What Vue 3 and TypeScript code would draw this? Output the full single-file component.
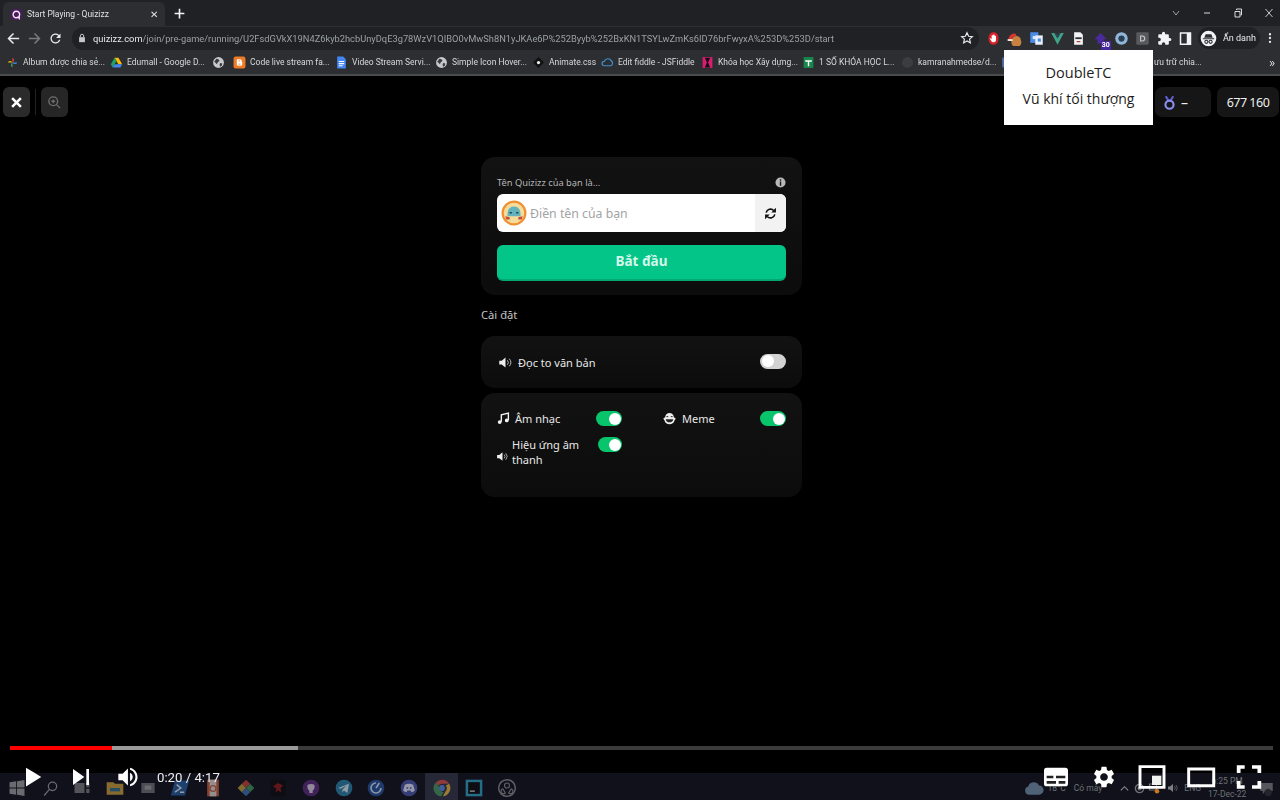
<template>
  <div class="screen">
    <div class="browser">
      <div class="tabstrip">
        <div class="tab">
          <Ico name="quizizz" :size="13" />
          <span class="tab-title">Start Playing - Quizizz</span>
          <span class="tab-close">✕</span>
        </div>
        <Ico class="new-tab" name="plus" :size="13" />
        <div class="win-btns">
          <Ico v-for="w in windowBtns" :key="w" :name="w" :size="12" />
        </div>
      </div>

      <div class="toolbar">
        <Ico name="back" :size="15" />
        <Ico class="dim" name="forward" :size="15" />
        <Ico name="reload" :size="15" />
        <div class="omnibox">
          <Ico name="lock" :size="10" />
          <span class="url"><b>quizizz.com</b>{{ urlPath }}</span>
          <Ico class="star" name="star" :size="14" />
        </div>
        <div class="extensions">
          <span v-for="e in extensions" :key="e" class="ext">
            <Ico :name="e" :size="15" />
            <i v-if="e === 'extArrow'" class="ext-badge">30</i>
          </span>
        </div>
        <div class="profile">
          <Ico name="incognito" :size="17" />
          <span>Ẩn danh</span>
        </div>
        <Ico class="menu-dots" name="dots" :size="14" />
      </div>

      <div class="bookmarks">
        <div v-for="b in bookmarks" :key="b.icon + b.label" class="bookmark" :style="{ width: b.width + 'px' }">
          <Ico v-if="b.icon" :name="b.icon" :size="13" />
          <span v-if="b.label">{{ b.label }}</span>
        </div>
        <span class="bm-more">»</span>
      </div>
    </div>

    <main class="page">
      <div class="topbar">
        <button class="square-btn"><Ico name="close" :size="15" /></button>
        <span class="top-divider"></span>
        <button class="square-btn muted"><Ico name="zoomIn" :size="15" /></button>
        <div class="chips">
          <div class="chip medal-chip"><Ico name="medal" :size="15" /><span>–</span></div>
          <div class="chip score-chip">677 160</div>
        </div>
      </div>

      <section class="column">
        <div class="card join-card">
          <div class="label-row">
            <span>Tên Quizizz của bạn là...</span>
            <Ico name="info" :size="11" />
          </div>
          <div class="name-input">
            <Ico class="avatar" name="avatar" :size="26" />
            <span class="placeholder">Điền tên của bạn</span>
            <span class="shuffle"><Ico name="sync" :size="13" /></span>
          </div>
          <button class="start-btn">Bắt đầu</button>
        </div>

        <h2 class="settings-title">Cài đặt</h2>

        <div class="card read-card">
          <Ico name="speaker" :size="15" />
          <span class="opt-text">Đọc to văn bản</span>
          <span class="toggle off"></span>
        </div>

        <div class="card options-card">
          <div class="option">
            <Ico name="music" :size="13" />
            <span class="opt-text">Âm nhạc</span>
            <span class="toggle"></span>
          </div>
          <div class="option">
            <Ico name="meme" :size="15" />
            <span class="opt-text">Meme</span>
            <span class="toggle"></span>
          </div>
          <div class="option effect">
            <Ico class="effect-icon" name="speaker" :size="13" />
            <span class="opt-text">Hiệu ứng âm thanh</span>
            <span class="toggle narrow"></span>
          </div>
        </div>
      </section>
    </main>

    <footer class="taskbar">
      <div class="task-icons">
        <span v-for="(t, i) in taskIcons" :key="i" class="task-icon" :class="{ running: t === 'chrome' }">
          <Ico :name="t" :size="20" />
        </span>
      </div>
      <div class="tray">
        <Ico name="cloud" :size="20" />
        <span class="tray-temp">18°C</span>
        <span class="tray-weather">Có mây</span>
        <Ico class="tray-up" name="trayUp" :size="11" />
        <Ico class="tray-disk" name="trayDisk" :size="11" />
        <Ico class="tray-net" name="trayNet" :size="12" />
        <Ico class="tray-sound" name="speaker" :size="12" />
        <span class="tray-lang">ENG</span>
        <span class="tray-clock">6:25 PM<br />17-Dec-22</span>
        <Ico class="tray-notif" name="trayNotif" :size="15" />
      </div>
    </footer>

    <div class="tooltip">
      <div class="tip-title">DoubleTC</div>
      <div class="tip-sub">Vũ khí tối thượng</div>
    </div>

    <div class="player">
      <div class="progress">
        <span class="played"></span>
        <span class="buffered"></span>
      </div>
      <div class="player-row">
        <Ico name="ytPlay" :size="48" />
        <Ico name="ytNext" :size="48" />
        <Ico name="ytVolume" :size="48" />
        <span class="time">0:20 / 4:17</span>
        <div class="player-right">
          <Ico v-for="c in playerRight" :key="c" :name="c" :size="48" />
        </div>
      </div>
    </div>
  </div>
</template>

<script setup lang="ts">
import { h } from 'vue';

type Shape = { d: string; fill?: string; stroke?: string; sw?: number; tf?: string };

// every icon is a list of paths in a 24x24 box, except the player ones (36x36)
const ICONS: { [key: string]: Shape[] } = {
  quizizz: [
    { d: 'M5 2h14a3 3 0 0 1 3 3v14a3 3 0 0 1-3 3H5a3 3 0 0 1-3-3V5a3 3 0 0 1 3-3z', fill: '#4a1c5e' },
    { d: 'M12 6a6 6 0 1 0 3 11l2 2v-4a6 6 0 0 0-5-9z', stroke: '#f2e6f5', sw: 2.6 },
  ],
  plus: [{ d: 'M12 3v18M3 12h18', stroke: '#f1f3f4', sw: 3 }],
  chevron: [{ d: 'M6 8l6 8 6-8', stroke: '#bdc1c6', sw: 1.6 }],
  minimize: [{ d: 'M6 12h12', stroke: '#dadce0', sw: 2 }],
  restore: [
    { d: 'M6 9h10v11H6z', stroke: '#dadce0', sw: 2 },
    { d: 'M9 6V4h10v12h-2', stroke: '#dadce0', sw: 2 },
  ],
  winClose: [{ d: 'M5 4l14 16M19 4L5 20', stroke: '#dadce0', sw: 1.8 }],
  back: [{ d: 'M21 12H5M12 4l-8 8 8 8', stroke: '#e8eaed', sw: 2.4 }],
  forward: [{ d: 'M3 12h16M12 4l8 8-8 8', stroke: '#e8eaed', sw: 2.4 }],
  reload: [
    {
      d: 'M17.65 6.35A7.958 7.958 0 0 0 12 4c-4.42 0-7.99 3.58-7.99 8s3.57 8 7.99 8c3.73 0 6.84-2.55 7.73-6h-2.08A5.99 5.99 0 0 1 12 18c-3.31 0-6-2.69-6-6s2.69-6 6-6c1.66 0 3.14.69 4.22 1.78L13 11h7V4l-2.35 2.35z',
      fill: '#e8eaed',
    },
  ],
  lock: [
    { d: 'M5 10h14v12H5z', fill: '#c4c7c9' },
    { d: 'M8 10V7a4 4 0 0 1 8 0v3', stroke: '#c4c7c9', sw: 2.4 },
  ],
  star: [{ d: 'M12 3l2.8 6 6.4.7-4.8 4.3 1.4 6.4L12 17l-5.8 3.4 1.4-6.4-4.8-4.3 6.4-.7z', stroke: '#e8eaed', sw: 2 }],
  extRed: [
    { d: 'M12 2c5 0 8 4 8 10s-3 10-8 10-8-4-8-10S7 2 12 2z', fill: '#d8202a' },
    { d: 'M9 8c0-2 2-2 2 0 0-3 3-3 3 0 1-1 2 0 2 1v5c0 3-2 4-4 4s-3-1-4-3l-2-3c1-1 2 0 3 1z', fill: '#fff' },
  ],
  extHat: [
    { d: 'M8 14a8 8 0 1 0 14 0c0-4-4-6-7-6-4 0-7 3-7 6z', fill: '#c8813f' },
    { d: 'M2 14c1-6 5-10 10-10 2 0 3 2 3 4-4 0-7 3-8 6z', fill: '#d8352c' },
    { d: 'M1 13h8v3H1z', fill: '#f1e8e0' },
  ],
  extTranslate: [
    { d: 'M2 2h13v17H2z', fill: '#4a8de8' },
    { d: 'M10 7h12v15H10z', fill: '#e8eef7' },
    { d: 'M6 8h5v5H6z', fill: '#dbe8fb' },
    { d: 'M14 12h5v5h-5z', fill: '#4a8de8' },
  ],
  extVue: [
    { d: 'M2 3h5l5 9 5-9h5L12 22z', fill: '#3fa486' },
    { d: 'M7 3h3l2 4 2-4h3l-5 9z', fill: '#2f4858' },
  ],
  extDoc: [
    { d: 'M5 2h10l4 4v16H5z', fill: '#f1f3f4' },
    { d: 'M7 10h10v3H7z', fill: '#333' },
    { d: 'M9 16h6v2H9z', fill: '#b3443c' },
  ],
  extArrow: [{ d: 'M12 3l10 10h-5v7H7v-7H2z', fill: '#4b2a9e' }],
  extRing: [
    { d: 'M12 2a10 10 0 1 0 0 20 10 10 0 0 0 0-20z', fill: '#8fb6d8' },
    { d: 'M12 7a5 5 0 1 0 0 10 5 5 0 0 0 0-10z', fill: '#2c3e55' },
  ],
  extD: [
    { d: 'M4 2h16a2 2 0 0 1 2 2v16a2 2 0 0 1-2 2H4a2 2 0 0 1-2-2V4a2 2 0 0 1 2-2z', fill: '#58595c' },
    { d: 'M9 8h2.5a4 4 0 0 1 0 8H9z', stroke: '#c9c9c9', sw: 1.8 },
  ],
  puzzle: [
    {
      d: 'M20.5 11H19V7a2 2 0 0 0-2-2h-4V3.5a2.5 2.5 0 0 0-5 0V5H4a2 2 0 0 0-2 2v3.8h1.5a2.7 2.7 0 0 1 0 5.4H2V20a2 2 0 0 0 2 2h3.8v-1.5a2.7 2.7 0 0 1 5.4 0V22H17a2 2 0 0 0 2-2v-4h1.5a2.5 2.5 0 0 0 0-5z',
      fill: '#f1f3f4',
    },
  ],
  sidebar: [
    { d: 'M4 3h16v18H4z', stroke: '#f1f3f4', sw: 2.4 },
    { d: 'M14 3h6v18h-6z', fill: '#f1f3f4' },
  ],
  incognito: [
    { d: 'M12 1a11 11 0 1 0 0 22 11 11 0 0 0 0-22z', fill: '#f1f3f4' },
    { d: 'M8 6h8l2 5H6zM4 11.5h16V13H4z', fill: '#2d2e31' },
    { d: 'M9 14.5a2.2 2.2 0 1 0 0 4.4 2.2 2.2 0 0 0 0-4.4zM15 14.5a2.2 2.2 0 1 0 0 4.4 2.2 2.2 0 0 0 0-4.4z', stroke: '#2d2e31', sw: 1.5 },
  ],
  dots: [{ d: 'M12 3.5a2 2 0 1 0 0 4 2 2 0 0 0 0-4zM12 10a2 2 0 1 0 0 4 2 2 0 0 0 0-4zM12 16.5a2 2 0 1 0 0 4 2 2 0 0 0 0-4z', fill: '#e8eaed' }],
  photos: [
    { d: 'M12 12V3a5 5 0 0 1 0 9z', fill: '#e8453c' },
    { d: 'M12 12h9a5 5 0 0 1-9 0z', fill: '#4285f4' },
    { d: 'M12 12v9a5 5 0 0 1 0-9z', fill: '#34a853' },
    { d: 'M12 12H3a5 5 0 0 1 9 0z', fill: '#fbbc05' },
  ],
  drive: [
    { d: 'M8.5 3h7l7 12h-7z', fill: '#fbbc05' },
    { d: 'M8.5 3l-7 12L5 21l7-12z', fill: '#1fa463' },
    { d: 'M5 21h14l3.5-6h-14z', fill: '#4285f4' },
  ],
  globe: [
    { d: 'M12 2a10 10 0 1 0 0 20 10 10 0 0 0 0-20z', fill: '#c6c8ca' },
    { d: 'M8 5l4 1 2 3-3 2-2 4-3-3-2-1zM15 13l4 1-1 4-3 2-1-4z', fill: '#3a3b3e' },
  ],
  blogger: [
    { d: 'M5 1h14a4 4 0 0 1 4 4v14a4 4 0 0 1-4 4H5a4 4 0 0 1-4-4V5a4 4 0 0 1 4-4z', fill: '#ef7a25' },
    { d: 'M8 6h5a3 3 0 0 1 3 4v1h1v4a3 3 0 0 1-3 3h-4a3 3 0 0 1-3-3V7z', fill: '#fff' },
    { d: 'M10 9h3M10 15h4', stroke: '#ef7a25', sw: 1.6 },
  ],
  gdocs: [
    { d: 'M4 1h11l5 5v17H4z', fill: '#4285f4' },
    { d: 'M7 9h10v2H7zM7 13h10v2H7zM7 17h7v2H7z', fill: '#fff' },
  ],
  animate: [
    { d: 'M12 2l10 10-10 10L2 12z', fill: '#111' },
    { d: 'M12 9a3 3 0 1 0 0 6 3 3 0 0 0 0-6z', fill: '#eee' },
  ],
  jsfiddle: [{ d: 'M6 18a4 4 0 0 1 0-8 7 7 0 0 1 13-1 5 5 0 0 1-1 9z', stroke: '#3f8fcf', sw: 2.2 }],
  pinkX: [
    { d: 'M3 2h18v20H3z', fill: '#d81b73' },
    { d: 'M7 3h10l-4 9 4 9H7l4-9z', fill: '#111' },
  ],
  sheet: [
    { d: 'M3 2h18v20H3z', fill: '#17884c' },
    { d: 'M6 8h12v2.5h-4.7V19h-2.6v-8.5H6z', fill: '#fff' },
  ],
  github: [{ d: 'M12 2a10 10 0 1 0 0 20 10 10 0 0 0 0-20z', fill: '#3c3d40' }],
  hidden: [{ d: 'M4 3h16v18H4z', fill: '#4d6ea8' }],
  close: [{ d: 'M5 5l14 14M19 5L5 19', stroke: '#fff', sw: 4 }],
  zoomIn: [{ d: 'M10 3a7 7 0 1 0 0 14 7 7 0 0 0 0-14zM15 15l6 6M10 7v6M7 10h6', stroke: '#6e6e6e', sw: 2.2 }],
  medal: [
    { d: 'M6 2l5 8M18 2l-5 8', stroke: '#5b5fd6', sw: 3.4 },
    { d: 'M12 9a6.5 6.5 0 1 0 0 13 6.5 6.5 0 0 0 0-13z', stroke: '#8b8ff0', sw: 3.4 },
  ],
  info: [
    { d: 'M12 1a11 11 0 1 0 0 22 11 11 0 0 0 0-22z', fill: '#b8b8b8' },
    { d: 'M10.5 5h3v3h-3zM10.5 10h3v9h-3z', fill: '#161616' },
  ],
  avatar: [
    { d: 'M12 .5a11.5 11.5 0 1 0 0 23 11.5 11.5 0 0 0 0-23z', fill: '#ef8f2f' },
    { d: 'M12 2.5a9.5 9.5 0 1 0 0 19 9.5 9.5 0 0 0 0-19z', fill: '#f5dc9a' },
    { d: 'M6 13c0-4 2-7 6-7s6 3 6 7v2H6z', fill: '#62b3bd' },
    { d: 'M8 11h2v1.5H8zM14 11h2v1.5h-2z', fill: '#24404a' },
    { d: 'M4 15l4 1v2H5zM20 15l-4 1v2h3z', fill: '#c8483c' },
  ],
  sync: [
    { d: 'M4 10.5A8.2 8.2 0 0 1 18 6.500', stroke: '#111', sw: 3 },
    { d: 'M22 1.500V10h-8.500z', fill: '#111' },
    { d: 'M20 13.500A8.2 8.2 0 0 1 6 17.500', stroke: '#111', sw: 3 },
    { d: 'M2 22.500V14h8.500z', fill: '#111' },
  ],
  speaker: [
    { d: 'M2 9v6h4l6 5V4L6 9z', fill: '#eee' },
    { d: 'M15 8.5a5 5 0 0 1 0 7M18 6a9 9 0 0 1 0 12', stroke: '#bbb', sw: 1.6 },
  ],
  music: [
    { d: 'M8 18V5l13-3v13', stroke: '#f2f2f2', sw: 2.6 },
    { d: 'M5 15a3.5 3.5 0 1 0 0 7 3.5 3.5 0 0 0 0-7zM18 12a3.5 3.5 0 1 0 0 7 3.5 3.5 0 0 0 0-7z', fill: '#f2f2f2' },
  ],
  meme: [
    { d: 'M5 10a7 7 0 0 1 14 0l3 2-2 3c-1 4-4 6-8 6s-7-2-8-6l-2-3z', fill: '#eee' },
    { d: 'M6 13h12c0 3-3 5-6 5s-6-2-6-5z', fill: '#222' },
    { d: 'M7 9h3M14 9h3', stroke: '#222', sw: 1.5 },
  ],
  ytPlay: [{ d: 'M12 26l6.500-4v-8L12 10zM18.500 22L25 18l-6.500-4z', fill: '#fff', tf: 'translate(2.2 2.2) scale(.88)' }],
  ytNext: [{ d: 'M12 24l8.500-6L12 12zM22 12v12h2V12z', fill: '#fff' }],
  ytVolume: [
    {
      d: 'M8 21h4l5 5V10l-5 5H8zM19 14v8c1.480-.68 2.500-2.230 2.500-4 0-1.740-1.020-3.260-2.500-4zM19 11.290c2.890.86 5 3.540 5 6.710s-2.110 5.850-5 6.710v2.060c4.010-.91 7-4.490 7-8.770s-2.990-7.860-7-8.770z',
      fill: '#fff',
      tf: 'translate(3.6 3.6) scale(.8)',
    },
  ],
  ytSubs: [
    { d: 'M11 11h14a2 2 0 0 1 2 2v10a2 2 0 0 1-2 2H11a2 2 0 0 1-2-2V13a2 2 0 0 1 2-2z', fill: '#fff' },
    { d: 'M11 17h5v2h-5zM18 17h7v2h-7zM11 21h7v2h-7zM20 21h5v2h-5z', fill: '#222' },
  ],
  ytGear: [
    {
      d: 'M19.14 12.94c.04-.3.06-.61.06-.94 0-.32-.02-.64-.07-.94l2.03-1.58a.49.49 0 0 0 .12-.61l-1.92-3.32a.488.488 0 0 0-.59-.22l-2.39.96c-.5-.38-1.03-.7-1.62-.94l-.36-2.54a.484.484 0 0 0-.48-.41h-3.84c-.24 0-.43.17-.47.41l-.36 2.54c-.59.24-1.13.57-1.62.94l-2.39-.96c-.22-.08-.47 0-.59.22L2.74 8.87c-.12.21-.08.47.12.61l2.03 1.58c-.05.3-.09.63-.09.94s.02.64.07.94l-2.03 1.58a.49.49 0 0 0-.12.61l1.92 3.32c.12.22.37.29.59.22l2.39-.96c.5.38 1.03.7 1.62.94l.36 2.54c.05.24.24.41.48.41h3.84c.24 0 .44-.17.47-.41l.36-2.54c.59-.24 1.13-.56 1.62-.94l2.39.96c.22.08.47 0 .59-.22l1.92-3.32c.12-.22.07-.47-.12-.61l-2.01-1.58zM12 15.6c-1.98 0-3.6-1.62-3.6-3.6s1.62-3.6 3.6-3.6 3.6 1.62 3.6 3.6-1.62 3.6-3.6 3.6z',
      fill: '#fff',
      tf: 'translate(8.4 8.4) scale(.8)',
    },
  ],
  ytMini: [
    { d: 'M9 10.200h18v15.600H9z', stroke: '#fff', sw: 2.200 },
    { d: 'M18 17h7v7h-7z', fill: '#f2f2f2' },
  ],
  ytTheater: [{ d: 'M9.500 12h18.800v12.500H9.500z', stroke: '#fff', sw: 2.200 }],
  ytFull: [{ d: 'M11 15v-4.500h4.500M21 10.500h5.500V15M26.500 21v4.500H21M15.500 25.500H11V21', stroke: '#fff', sw: 2.800 }],
  win: [{ d: 'M3 5l8-1v7.500H3zM12 4l9-1.500v9h-9zM3 12.500h8V20l-8-1zM12 12.500h9v9L12 20z', fill: '#9a9a9e' }],
  search: [{ d: 'M15 5a5 5 0 1 0 0 10 5 5 0 0 0 0-10zM11 14l-6 7', stroke: '#9a9a9e', sw: 1.500 }],
  taskview: [{ d: 'M3 6h12v12H3zM17 6h4v5h-4zM17 13h4v5h-4z', fill: '#77777c' }],
  explorer: [
    { d: 'M2 5h8l2 2h10v13H2z', fill: '#c79a3a' },
    { d: 'M6 12h12v4H6z', fill: '#2f6f8f' },
  ],
  printer: [
    { d: 'M4 6h16v12H4z', fill: '#6c6f74' },
    { d: 'M8 9h8v5H8z', fill: '#9a9da2' },
  ],
  powershell: [
    { d: 'M6 3h17l-5 18H1z', fill: '#245a9c' },
    { d: 'M8 8l5 4-7 5M12 17h5', stroke: '#dfe8f2', sw: 1.8 },
  ],
  recycle: [
    { d: 'M5 2h14v20H5z', fill: '#c45a3c' },
    { d: 'M8 2h8v20H8z', fill: '#d8d3cd' },
    { d: 'M12 9a3.5 3.5 0 1 0 0 7 3.5 3.5 0 0 0 0-7z', stroke: '#c45a3c', sw: 1.5 },
  ],
  gitk: [
    { d: 'M12 2l5 5-5 5-5-5z', fill: '#c0403a' },
    { d: 'M17 7l5 5-5 5-5-5z', fill: '#3f8f5a' },
    { d: 'M7 7l5 5-5 5-5-5z', fill: '#b89a3c' },
    { d: 'M12 12l5 5-5 5-5-5z', fill: '#3f6fb0' },
  ],
  redDark: [
    { d: 'M3 2h18v20H3z', fill: '#0c0c0f' },
    { d: 'M6 10l6-4 6 3-3 3 1 5-4-2-3 2 1-4z', fill: '#8c1a1a' },
  ],
  ghPurple: [
    { d: 'M12 2a10 10 0 1 0 0 20 10 10 0 0 0 0-20z', fill: '#5b2a7a' },
    { d: 'M8 8c2-1 6-1 8 0 1 3 0 6-2 7v3h-4v-3c-2-1-3-4-2-7z', fill: '#d8c8e0' },
  ],
  telegram: [
    { d: 'M12 2a10 10 0 1 0 0 20 10 10 0 0 0 0-20z', fill: '#2a7fa8' },
    { d: 'M5 12l13-5-2 11-4-3-2 2v-3l5-5-7 4z', fill: '#d6e8f0' },
  ],
  mysql: [
    { d: 'M12 2a10 10 0 1 0 0 20 10 10 0 0 0 0-20z', fill: '#264f97' },
    { d: 'M12 6a6 6 0 1 0 6 6', stroke: '#cfdcf2', sw: 2 },
    { d: 'M12 12l4-6', stroke: '#cfdcf2', sw: 2 },
  ],
  discord: [
    { d: 'M12 2a10 10 0 1 0 0 20 10 10 0 0 0 0-20z', fill: '#4a55a8' },
    { d: 'M7 8c3-1.5 7-1.5 10 0l2 7c-1 1-3 2-4 2l-1-2h-4l-1 2c-1 0-3-1-4-2z', fill: '#e0e3f5' },
    { d: 'M9 11h2v2H9zM13 11h2v2h-2z', fill: '#4a55a8' },
  ],
  chrome: [
    { d: 'M12 2a10 10 0 0 1 8.700 5H12a5 5 0 0 0-4.500 2.800L4.800 5A10 10 0 0 1 12 2z', fill: '#c9453a' },
    { d: 'M20.700 7A10 10 0 0 1 13 22l4.300-7.500A5 5 0 0 0 16.500 9z', fill: '#d9aa30' },
    { d: 'M4.800 5l4.300 7.500A5 5 0 0 0 14 16.700L11 22A10 10 0 0 1 4.800 5z', fill: '#3d8a4e' },
    { d: 'M12 8.500a3.500 3.500 0 1 0 0 7 3.500 3.500 0 0 0 0-7z', fill: '#4a7fd0' },
  ],
  webstorm: [
    { d: 'M2 2h20v20H2z', fill: '#2f9fc0' },
    { d: 'M5 5h14v14H5z', fill: '#0c0c10' },
    { d: 'M7 15h6v1.500H7z', fill: '#ddd' },
  ],
  obs: [
    { d: 'M12 2a10 10 0 1 0 0 20 10 10 0 0 0 0-20z', stroke: '#8a8a8e', sw: 1.8 },
    { d: 'M12 6a3 3 0 1 0 0 6 3 3 0 0 0 0-6zM7 13a3 3 0 1 0 3 5zM17 13a3 3 0 1 1-3 5z', stroke: '#8a8a8e', sw: 1.4 },
  ],
  cloud: [{ d: 'M6 20a5 5 0 0 1-1-9.800A7 7 0 0 1 18 9a5.500 5.500 0 0 1 0 11z', fill: '#4f6278' }],
  trayUp: [{ d: 'M4 16l8-8 8 8', stroke: '#8a8c90', sw: 2.4 }],
  trayDisk: [{ d: 'M12 3a9 9 0 1 0 0 18 9 9 0 0 0 0-18zM12 9a3 3 0 1 0 0 6 3 3 0 0 0 0-6z', stroke: '#6f7278', sw: 3 }],
  trayNet: [
    { d: 'M3 4h14v12H3z', stroke: '#6f7278', sw: 2.4 },
    { d: 'M18 14a4.500 4.500 0 1 0 0 9 4.500 4.500 0 0 0 0-9z', fill: '#c9781f' },
  ],
  trayNotif: [
    { d: 'M2 3h20v13H10l-4 5v-5H2z', fill: '#55575c' },
    { d: 'M17 13a6 6 0 1 0 0 11 6 6 0 0 0 0-11z', fill: '#23252d' },
  ],
};

const PLAYER_ICONS = ['ytPlay', 'ytNext', 'ytVolume', 'ytSubs', 'ytGear', 'ytMini', 'ytTheater', 'ytFull'];

const Ico = (props: { name: string; size: number }) => {
  const box = PLAYER_ICONS.includes(props.name) ? 36 : 24;
  return h(
    'svg',
    { class: 'ico', width: props.size, height: props.size, viewBox: `0 0 ${box} ${box}` },
    (ICONS[props.name] || []).map((s) =>
      h('path', {
        d: s.d,
        fill: s.fill || 'none',
        stroke: s.stroke || 'none',
        'stroke-width': s.sw || 0,
        transform: s.tf,
      }),
    ),
  );
};
Ico.props = ['name', 'size'];

const urlPath =
  '/join/pre-game/running/U2FsdGVkX19N4Z6kyb2hcbUnyDqE3g78WzV1QIBO0vMwSh8N1yJKAe6P%252Byyb%252BxKN1TSYLwZmKs6ID76brFwyxA%253D%253D/start';

const windowBtns = ['chevron', 'minimize', 'restore', 'winClose'];

const extensions = [
  'extRed',
  'extHat',
  'extTranslate',
  'extVue',
  'extDoc',
  'extArrow',
  'extRing',
  'extD',
  'puzzle',
  'sidebar',
];

// the last folder's name runs under the tooltip, only its tail shows
const bookmarks = [
  { icon: 'photos', label: 'Album được chia sẻ...', width: 104 },
  { icon: 'drive', label: 'Edumall - Google D...', width: 102 },
  { icon: 'globe', label: '', width: 21 },
  { icon: 'blogger', label: 'Code live stream fa...', width: 102 },
  { icon: 'gdocs', label: 'Video Stream Servi...', width: 100 },
  { icon: 'globe', label: 'Simple Icon Hover...', width: 97 },
  { icon: 'animate', label: 'Animate.css', width: 69 },
  { icon: 'jsfiddle', label: 'Edit fiddle - JSFiddle', width: 100 },
  { icon: 'pinkX', label: 'Khóa học Xây dựng...', width: 101 },
  { icon: 'sheet', label: '1 SỐ KHÓA HỌC L...', width: 99 },
  { icon: 'github', label: 'kamranahmedse/d...', width: 99 },
  { icon: 'hidden', label: '', width: 154 },
  { icon: '', label: 'ưu trữ chia...', width: 50 },
];

const taskIcons = [
  'win',
  'search',
  'taskview',
  'explorer',
  'printer',
  'powershell',
  'recycle',
  'gitk',
  'redDark',
  'ghPurple',
  'telegram',
  'mysql',
  'discord',
  'chrome',
  'webstorm',
  'obs',
];

const playerRight = ['ytSubs', 'ytGear', 'ytMini', 'ytTheater', 'ytFull'];
</script>

<style>
html,
body {
  margin: 0;
  background: #000;
}
</style>

<style scoped>
.screen {
  position: relative;
  width: 1280px;
  height: 800px;
  overflow: hidden;
  display: flex;
  flex-direction: column;
  background: #000;
  font-family: "Noto Sans", "Liberation Sans", sans-serif;
  color: #eee;
}

.ico {
  display: block;
  flex: none;
}

/* browser chrome */
.browser {
  flex: none;
  height: 76px;
  display: flex;
  flex-direction: column;
  font-family: Roboto, "Liberation Sans", sans-serif;
  filter: blur(0.4px);
}

.tabstrip {
  height: 26px;
  display: flex;
  align-items: flex-end;
  background: #202124;
  padding-left: 3px;
}

.tab {
  width: 162px;
  height: 24px;
  box-sizing: border-box;
  display: flex;
  align-items: center;
  padding: 0 7px;
  background: #2d2e31;
  border-radius: 6px 6px 0 0;
}

.tab-title {
  margin-left: 4px;
  flex: 1;
  font-size: 8.5px;
  color: #dfe1e5;
}

.tab-close {
  font-size: 10px;
  color: #dfe1e5;
}

.new-tab {
  margin: 0 0 6px 8px;
}

.win-btns {
  margin-left: auto;
  align-self: center;
  display: flex;
  gap: 19px;
  padding-right: 5px;
}

.toolbar {
  height: 24px;
  display: flex;
  align-items: center;
  background: #2d2e31;
  padding-left: 6px;
}

.toolbar > .ico + .ico {
  margin-left: 6px;
}

.dim {
  opacity: 0.4;
}

.omnibox {
  width: 907px;
  height: 23px;
  margin-left: 9px;
  box-sizing: border-box;
  display: flex;
  align-items: center;
  padding: 0 5px;
  background: #202124;
  border-radius: 12px;
}

.url {
  margin-left: 6px;
  font-size: 9.3px;
  white-space: nowrap;
  color: #9aa0a6;
}

.url b {
  font-weight: 400;
  color: #e8eaed;
}

.star {
  margin-left: auto;
}

.extensions {
  display: flex;
  margin-left: 4px;
}

.ext {
  position: relative;
  width: 21.3px;
  height: 22px;
  display: flex;
  align-items: center;
  justify-content: center;
}

.ext-badge {
  position: absolute;
  right: 0;
  bottom: -1px;
  padding: 0 1px;
  font-size: 7px;
  line-height: 9px;
  font-style: normal;
  font-weight: 700;
  color: #fff;
  background: #4527a0;
}

.profile {
  width: 62px;
  height: 22px;
  margin-left: 2px;
  box-sizing: border-box;
  display: flex;
  align-items: center;
  gap: 6px;
  padding-left: 2px;
  font-size: 9px;
  color: #e8eaed;
  background: #202124;
  border-radius: 11px;
}

.toolbar > .menu-dots {
  margin-left: 3px;
}

.bookmarks {
  height: 26px;
  box-sizing: border-box;
  display: flex;
  align-items: center;
  padding: 0 5px 0 6px;
  background: #2d2e31;
  border-bottom: 2px solid #4a4b4e;
  font-size: 8.5px;
  color: #d7d9dc;
}

.bookmark {
  display: flex;
  align-items: center;
  gap: 4px;
  flex: none;
  white-space: nowrap;
}

.bm-more {
  margin-left: auto;
  font-size: 13px;
}

/* page */
.page {
  flex: 1;
  min-height: 0;
  background: #000;
}

.topbar {
  display: flex;
  align-items: center;
  height: 30px;
  padding: 11px 1px 0 3px;
}

.square-btn {
  width: 27px;
  height: 30px;
  padding: 0;
  display: flex;
  align-items: center;
  justify-content: center;
  background: #2b2b2b;
  border: 0;
  border-radius: 6px;
}

.square-btn.muted {
  background: #262626;
}

.top-divider {
  width: 1px;
  height: 26px;
  margin: 0 5px;
  background: #222;
}

.chips {
  margin-left: auto;
  display: flex;
  gap: 6px;
}

.chip {
  height: 30px;
  display: flex;
  align-items: center;
  background: #161616;
  border-radius: 7px;
  font-size: 14px;
  color: #eee;
}

.medal-chip {
  width: 56px;
  box-sizing: border-box;
  padding-left: 7px;
  gap: 4px;
}

.score-chip {
  width: 62px;
  justify-content: center;
  white-space: nowrap;
  font-size: 12.5px;
  letter-spacing: -0.5px;
}

.column {
  width: 321px;
  margin: 40px 478px 0 auto;
  display: flex;
  flex-direction: column;
}

.card {
  box-sizing: border-box;
  background: linear-gradient(180deg, #121212, #0c0c0c);
  border-radius: 14px;
}

.join-card {
  height: 138px;
  padding: 18px 16px 0;
}

.label-row {
  display: flex;
  align-items: center;
  justify-content: space-between;
  height: 14px;
  font-size: 9.3px;
  color: #b5b5b5;
}

.name-input {
  height: 38px;
  margin-top: 5px;
  display: flex;
  align-items: center;
  background: #fff;
  border-radius: 6px;
  overflow: hidden;
}

.avatar {
  margin-left: 4px;
}

.placeholder {
  margin-left: 3px;
  font-size: 12.3px;
  color: #a3a3a3;
}

.shuffle {
  margin-left: auto;
  width: 31px;
  height: 38px;
  display: flex;
  align-items: center;
  justify-content: center;
  background: #f2f2f2;
}

.start-btn {
  width: 100%;
  height: 36px;
  margin-top: 13px;
  padding: 0 0 2px;
  display: block;
  font: 700 13.5px "Noto Sans", sans-serif;
  color: #d5f6ea;
  background: #02c587;
  border: 0;
  border-bottom: 2px solid #02a873;
  border-radius: 6px;
}

.settings-title {
  margin: 13px 0 14px;
  font-size: 11.2px;
  line-height: 14px;
  font-weight: 400;
  color: #c4c4c4;
}

.read-card {
  height: 52px;
  display: flex;
  align-items: center;
  padding: 0 16px 0 17px;
}

.opt-text {
  font-size: 11px;
  line-height: 15px;
  color: #e8e8e8;
}

.read-card .opt-text {
  margin-left: 5px;
}

.read-card .toggle {
  margin-left: auto;
  margin-top: -2px;
}

.toggle {
  position: relative;
  flex: none;
  width: 26px;
  height: 15px;
  background: #08c46a;
  border-radius: 8px;
}

.toggle::after {
  content: "";
  position: absolute;
  top: 1.5px;
  right: 1.5px;
  width: 12px;
  height: 12px;
  background: #fff;
  border-radius: 50%;
}

.toggle.off {
  background: #d2d2d2;
}

.toggle.off::after {
  right: auto;
  left: 1.5px;
}

.toggle.narrow {
  width: 24px;
}

.options-card {
  height: 104px;
  margin-top: 5px;
  padding: 18px 16px 0;
  display: grid;
  grid-template-columns: 125px 124px;
  grid-auto-rows: min-content;
  row-gap: 12px;
  justify-content: space-between;
}

.option {
  display: flex;
  align-items: center;
  gap: 5px;
}

.option .toggle {
  margin-left: auto;
}

.effect {
  align-items: flex-start;
  grid-column: 1;
  margin-top: -1px;
}

.effect-icon {
  margin-top: 13px;
  margin-left: -1px;
}

.effect .opt-text {
  width: 74px;
  margin-left: -2px;
}

/* windows taskbar, dimmed by the player gradient */
.taskbar {
  flex: none;
  height: 27px;
  display: flex;
  align-items: center;
  background: #10111a;
}

.task-icons {
  display: flex;
  padding-left: 0.5px;
}

.task-icons .ico {
  opacity: 0.65;
}

.task-icon {
  width: 32.7px;
  height: 27px;
  padding-top: 3px;
  display: flex;
  align-items: center;
  justify-content: center;
  box-sizing: border-box;
}

.task-icon.running {
  background: #262838;
}

.tray {
  margin-left: 500px;
  padding-top: 3px;
  display: flex;
  align-items: center;
  font-size: 8.5px;
  color: #6f7278;
  font-family: Roboto, sans-serif;
  white-space: nowrap;
}

.tray-temp {
  margin-left: 4px;
}

.tray-weather {
  margin-left: 8px;
}

.tray-up {
  margin-left: 17px;
}

.tray-disk {
  margin-left: 4px;
}

.tray-net {
  margin-left: 3px;
}

.tray-sound {
  margin-left: 7px;
  opacity: 0.5;
}

.tray-lang {
  margin-left: 5px;
}

.tray-clock {
  margin-left: 7px;
  line-height: 13px;
  text-align: center;
}

.tray-notif {
  margin-left: 13px;
}

/* extension tooltip */
.tooltip {
  position: absolute;
  left: 1004px;
  top: 50px;
  width: 149px;
  height: 75px;
  box-sizing: border-box;
  padding-top: 13px;
  background: #fff;
  text-align: center;
  color: #1d1d1d;
  font-family: "Open Sans", "Noto Sans", sans-serif;
}

.tip-title {
  font-size: 14.5px;
  line-height: 20px;
}

.tip-sub {
  margin-top: 6px;
  font-size: 14px;
  line-height: 20px;
}

/* youtube player controls */
.player {
  position: absolute;
  left: 0;
  right: 0;
  top: 746px;
}

.progress {
  position: relative;
  height: 4px;
  margin: 0 7px 0 10px;
  background: #3a3a3a;
}

.played,
.buffered {
  position: absolute;
  top: 0;
  bottom: 0;
  left: 0;
}

.played {
  width: 102px;
  background: #f00;
  z-index: 1;
}

.buffered {
  width: 288px;
  background: #9a9a9a;
}

.player-row {
  display: flex;
  align-items: center;
  height: 48px;
  margin-top: 3px;
  padding-left: 9px;
  filter: blur(0.3px);
}

.time {
  margin-left: 4px;
  font: 13.2px Roboto, "Liberation Sans", sans-serif;
  color: #eee;
  white-space: nowrap;
}

.player-right {
  margin-left: auto;
  display: flex;
  padding-right: 8px;
}
</style>
